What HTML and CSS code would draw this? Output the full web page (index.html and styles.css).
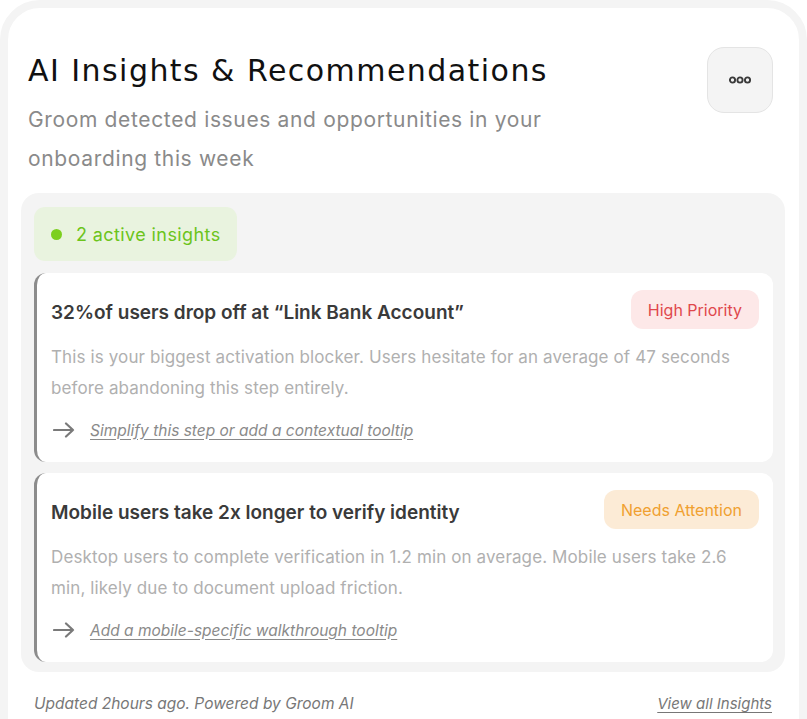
FILE: index.html
```html
<!DOCTYPE html>
<html lang="en">
<head>
<meta charset="utf-8">
<title>AI Insights &amp; Recommendations</title>
<link rel="stylesheet" href="styles.css">
</head>
<body>
<section class="card">
  <header class="header">
    <div class="header-text">
      <h1 class="title">AI Insights &amp; Recommendations</h1>
      <p class="subtitle">Groom detected issues and opportunities in your<br>onboarding this week</p>
    </div>
    <button class="menu-btn" aria-label="More options">
      <svg width="24" height="8" viewBox="0 0 24 8" aria-hidden="true">
        <circle cx="4.5" cy="4" r="2.6" fill="none" stroke="#3a3a3a" stroke-width="1.9"/>
        <circle cx="12" cy="4" r="2.6" fill="none" stroke="#3a3a3a" stroke-width="1.9"/>
        <circle cx="19.5" cy="4" r="2.6" fill="none" stroke="#3a3a3a" stroke-width="1.9"/>
      </svg>
    </button>
  </header>

  <div class="panel">
    <div class="status">
      <span class="status-dot"></span>
      <span class="status-text">2 active insights</span>
    </div>

    <article class="insight">
      <div class="insight-head">
        <h2 class="insight-title">32%of users drop off at “Link Bank Account”</h2>
        <span class="tag tag-high">High Priority</span>
      </div>
      <p class="insight-body">This is your biggest activation blocker. Users hesitate for an average of 47 seconds before abandoning this step entirely.</p>
      <div class="action">
        <svg class="arrow" width="22" height="16" viewBox="0 0 22 16" aria-hidden="true">
          <path d="M1 8 H20 M13 1.5 L20 8 L13 14.5" fill="none" stroke="#7a7a7a" stroke-width="2.2" stroke-linecap="round" stroke-linejoin="round"/>
        </svg>
        <a class="action-link" href="#">Simplify this step or add a contextual tooltip</a>
      </div>
    </article>

    <article class="insight">
      <div class="insight-head">
        <h2 class="insight-title">Mobile users take 2x longer to verify identity</h2>
        <span class="tag tag-warn">Needs Attention</span>
      </div>
      <p class="insight-body">Desktop users to complete verification in 1.2 min on average. Mobile users take 2.6 min, likely due to document upload friction.</p>
      <div class="action">
        <svg class="arrow" width="22" height="16" viewBox="0 0 22 16" aria-hidden="true">
          <path d="M1 8 H20 M13 1.5 L20 8 L13 14.5" fill="none" stroke="#7a7a7a" stroke-width="2.2" stroke-linecap="round" stroke-linejoin="round"/>
        </svg>
        <a class="action-link" href="#">Add a mobile-specific walkthrough tooltip</a>
      </div>
    </article>
  </div>

  <footer class="footer">
    <span class="updated">Updated 2hours ago. Powered by Groom AI</span>
    <a class="view-all" href="#">View all Insights</a>
  </footer>
</section>
</body>
</html>
```

FILE: styles.css
```css
* { box-sizing: border-box; }

html, body {
  margin: 0;
  padding: 0;
  background: #ffffff;
}

body {
  font-family: "Inter", "Noto Sans", sans-serif;
  color: #222;
  overflow: hidden;
}

.card {
  width: 807px;
  min-height: 780px;
  border: 8px solid #f4f4f4;
  border-radius: 40px;
  background: #ffffff;
  padding: 0 14px 0 13px;
}

.header {
  display: flex;
  justify-content: space-between;
  align-items: flex-start;
  padding: 39px 12px 0 7px;
}

.title {
  margin: 4px 0 0;
  font-family: "DejaVu Sans", "Inter", sans-serif;
  font-size: 30px;
  line-height: 40px;
  font-weight: 400;
  color: #111;
  letter-spacing: 1.45px;
}

.subtitle {
  margin: 9px 0 0;
  font-size: 21px;
  line-height: 39px;
  color: #8a8a8a;
  font-weight: 400;
  letter-spacing: 0.65px;
}

.menu-btn {
  width: 66px;
  height: 66px;
  border-radius: 17px;
  border: 1px solid #e4e4e4;
  background: #f4f4f4;
  display: flex;
  align-items: center;
  justify-content: center;
  padding: 0;
  margin-top: 0;
}

.panel {
  margin-top: 15px;
  background: #f4f4f4;
  border-radius: 18px;
  padding: 14px 12px 10px 13px;
  display: flex;
  flex-direction: column;
  gap: 11px;
}

.status {
  align-self: flex-start;
  display: flex;
  align-items: center;
  gap: 14px;
  height: 54px;
  padding: 0 16px 0 17px;
  background: #e9f3df;
  border-radius: 11px;
  margin-bottom: 1px;
}

.status-dot {
  width: 11px;
  height: 11px;
  border-radius: 50%;
  background: #7ccf1e;
}

.status-text {
  font-size: 18px;
  color: #6cc41b;
  letter-spacing: 0.4px;
}

.insight {
  background: #ffffff;
  border-left: 3px solid #8c8c8c;
  border-radius: 12px;
  padding: 17px 14px 20px 14px;
}

.insight-head {
  display: flex;
  justify-content: space-between;
  align-items: flex-start;
  gap: 12px;
}

.insight-title {
  margin: 11px 0 0;
  font-size: 19px;
  line-height: 24px;
  font-weight: 600;
  color: #3a3a3a;
}

.tag {
  flex: none;
  height: 39px;
  padding: 0 17px;
  border-radius: 12px;
  display: flex;
  align-items: center;
  font-size: 16px;
}

.tag-high {
  background: #fde8e8;
  color: #e0474c;
}

.tag-warn {
  background: #fcebd6;
  color: #f0a030;
}

.insight-body {
  margin: 13px 0 0;
  font-size: 17px;
  line-height: 31px;
  color: #b0b0b0;
  letter-spacing: 0.12px;
}

.action {
  margin-top: 14px;
  display: flex;
  align-items: center;
  gap: 15px;
  padding-left: 2px;
  height: 24px;
}

.arrow { flex: none; }

.action-link {
  font-size: 15.5px;
  font-style: italic;
  color: #8a8a8a;
  text-decoration: underline;
  text-underline-offset: 3px;
}

.footer {
  display: flex;
  justify-content: space-between;
  align-items: center;
  margin-top: 22px;
  padding: 0 13px 0 13px;
  font-size: 15.5px;
  line-height: 20px;
}

.updated {
  font-style: italic;
  color: #777;
}

.view-all {
  font-style: italic;
  color: #777;
  font-size: 15px;
  text-decoration: underline;
  text-underline-offset: 3px;
}
```
